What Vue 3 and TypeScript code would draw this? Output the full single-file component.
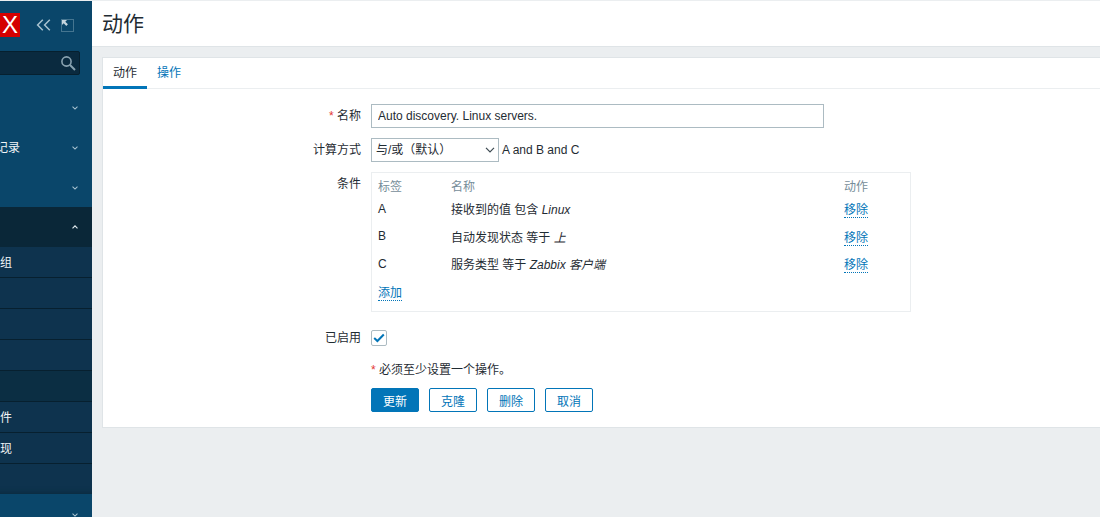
<script setup lang="ts">
interface MenuItem {
  label: string
  open?: boolean
}

interface Condition {
  tag: string
  text: string
  value: string
}

const topMenu: MenuItem[] = [{ label: '监测' }, { label: '资产记录' }, { label: '报表' }]

const subMenu = [
  { label: '主机群组' },
  { label: '模板' },
  { label: '主机' },
  { label: '维护' },
  { label: '动作', selected: true },
  { label: '关联事件' },
  { label: '自动发现' },
  { label: '服务' },
]

const conditions: Condition[] = [
  { tag: 'A', text: '接收到的值 包含 ', value: 'Linux' },
  { tag: 'B', text: '自动发现状态 等于 ', value: '上' },
  { tag: 'C', text: '服务类型 等于 ', value: 'Zabbix 客户端' },
]

const buttons = ['克隆', '删除', '取消']
</script>

<template>
  <div class="page">
    <aside class="sidebar">
      <div class="side-inner">
        <div class="logo-row">
          <div class="logo">X</div>
          <button class="icon-btn collapse" type="button">
            <svg width="15" height="12" viewBox="0 0 15 12" fill="none">
              <path d="M6.8.8L1.6 6l5.200 5.200M13.800.8L8.600 6l5.200 5.200" stroke="#a9c3d1" stroke-width="1.5" />
            </svg>
          </button>
          <button class="icon-btn expand" type="button">
            <svg width="13" height="13" viewBox="0 0 13 13" fill="none">
              <rect x=".5" y=".5" width="12" height="12" stroke="#a9c3d1" stroke-opacity=".75" stroke-dasharray="1 1" />
              <path d="M1 1h5L4.300 2.700l2.600 2.600-1.600 1.600-2.600-2.600L1 6z" fill="#c5d5de" />
            </svg>
          </button>
        </div>
        <div class="search">
          <svg width="16" height="16" viewBox="0 0 16 16" fill="none">
            <circle cx="6.5" cy="6.5" r="4.6" stroke="#8aa3b1" stroke-width="1.6" />
            <path d="M10 10l5 5" stroke="#8aa3b1" stroke-width="2" />
          </svg>
        </div>
        <nav class="menu">
          <a v-for="item in topMenu" :key="item.label" class="menu-item">
            <span>{{ item.label }}</span>
            <svg class="chev" width="6" height="4" viewBox="0 0 8 5" fill="none">
              <path d="M.7.7L4 4l3.300-3.300" stroke="#a9c3d1" stroke-width="1.400" />
            </svg>
          </a>
          <a class="menu-item active">
            <span>配置</span>
            <svg class="chev" width="6" height="4" viewBox="0 0 8 5" fill="none">
              <path d="M.7 4.300L4 1l3.300 3.300" stroke="#dfe8ed" stroke-width="1.600" />
            </svg>
          </a>
          <div class="sub">
            <a
              v-for="item in subMenu"
              :key="item.label"
              class="sub-item"
              :class="{ selected: item.selected }"
            >{{ item.label }}</a>
          </div>
          <a class="menu-item">
            <span>管理</span>
            <svg class="chev" width="6" height="4" viewBox="0 0 8 5" fill="none">
              <path d="M.7.7L4 4l3.300-3.300" stroke="#a9c3d1" stroke-width="1.400" />
            </svg>
          </a>
        </nav>
      </div>
    </aside>

    <main class="main">
      <header class="head">
        <h1>动作</h1>
      </header>
      <section class="card">
        <div class="tabs">
          <a class="tab on">动作</a>
          <a class="tab">操作</a>
        </div>
        <form class="form" @submit.prevent>
          <div class="row">
            <label class="lbl"><i>*</i> 名称</label>
            <input class="name-input" type="text" value="Auto discovery. Linux servers." />
          </div>
          <div class="row">
            <label class="lbl">计算方式</label>
            <div class="calc">
              <div class="select-wrap">
                <select class="calc-select">
                  <option>与/或（默认）</option>
                </select>
                <svg class="select-chev" width="10" height="6" viewBox="0 0 10 6" fill="none">
                  <path d="M1 .8L5 4.800 9 .8" stroke="#3d4a52" stroke-width="1.200" />
                </svg>
              </div>
              <span>A and B and C</span>
            </div>
          </div>
          <div class="row">
            <label class="lbl">条件</label>
            <div class="cond-box">
              <div class="cond-head">
                <span>标签</span>
                <span>名称</span>
                <span>动作</span>
              </div>
              <div v-for="c in conditions" :key="c.tag" class="cond-row">
                <span>{{ c.tag }}</span>
                <span>{{ c.text }}<em>{{ c.value }}</em></span>
                <span><a class="link">移除</a></span>
              </div>
              <div class="cond-row"><span><a class="link">添加</a></span></div>
            </div>
          </div>
          <div class="row enabled-row">
            <label class="lbl">已启用</label>
            <span class="check">
              <svg width="12" height="10" viewBox="0 0 12 10" fill="none">
                <path d="M1.200 5l3.200 3L10.800 1.500" stroke="#0275b8" stroke-width="2" />
              </svg>
            </span>
          </div>
          <div class="row note-row">
            <span></span>
            <p class="note"><i>*</i> 必须至少设置一个操作。</p>
          </div>
          <div class="row btn-row">
            <span></span>
            <div class="btns">
              <button class="btn primary" type="button">更新</button>
              <button v-for="b in buttons" :key="b" class="btn" type="button">{{ b }}</button>
            </div>
          </div>
        </form>
      </section>
    </main>
  </div>
</template>

<style>
html,
body {
  margin: 0;
  background: #ebeef0;
}
</style>

<style scoped>
.page {
  display: flex;
  width: 1100px;
  height: 517px;
  overflow: hidden;
  box-sizing: border-box;
  padding-top: 1px;
  background: #ebeef0;
  color: #1f2c33;
  font-family: "Liberation Sans", "Noto Sans CJK SC", sans-serif;
  font-size: 12px;
}

.sidebar {
  flex: 0 0 92px;
  overflow: hidden;
  background: #0a466a;
}

.side-inner {
  width: 128px;
  margin-left: -36px;
}

.logo-row {
  display: flex;
  align-items: center;
  height: 24px;
  padding-top: 12px;
  padding-bottom: 14px;
}

.logo {
  width: 56px;
  height: 24px;
  background: #d40000;
  color: #fff;
  font-size: 24px;
  line-height: 24px;
  text-align: right;
  padding-right: 2px;
  box-sizing: border-box;
}

.icon-btn {
  padding: 0;
  border: 0;
  background: none;
  display: flex;
}

.collapse {
  margin-left: 16px;
}

.expand {
  margin-left: 10px;
}

.search {
  display: flex;
  align-items: center;
  justify-content: flex-end;
  box-sizing: border-box;
  height: 24px;
  width: 116px;
  padding-right: 3px;
  background: #0a2a3f;
  border: 1px solid #06202f;
  border-radius: 2px;
}

.menu {
  margin-top: 12px;
}

.menu-item {
  display: flex;
  align-items: center;
  justify-content: space-between;
  box-sizing: border-box;
  height: 40px;
  padding: 0 14px 1px 8px;
  color: #f2f5f7;
}

.menu-item.active {
  padding-bottom: 0;
  background: #0a2738;
}

.chev {
  flex: none;
  margin-top: 3px;
}

.active .chev {
  margin-top: 0;
}

.sub {
  background: #0e334e;
  box-shadow: inset 0 -6px 6px -6px #0a2738;
}

.sub-item {
  display: block;
  box-sizing: border-box;
  height: 31px;
  line-height: 32px;
  color: #f2f5f7;
  white-space: nowrap;
  border-bottom: 1px solid #07202f;
}

.sub-item:last-child {
  height: 30px;
  border-bottom: 0;
}

.sub-item.selected {
  background: #0b2e43;
}

.main {
  flex: 1;
  min-width: 0;
  display: flex;
  flex-direction: column;
}

.head {
  display: flex;
  align-items: center;
  box-sizing: border-box;
  height: 46px;
  padding: 0 0 3px 10px;
  background: #fff;
  border-bottom: 1px solid #dfe4e7;
}

h1 {
  margin: 0;
  font-size: 21px;
  font-weight: 400;
}

.card {
  margin: 10px -10px 0 10px;
  height: 371px;
  box-sizing: border-box;
  background: #fff;
  border: 1px solid #dfe4e7;
}

.tabs {
  display: flex;
  height: 31px;
  box-sizing: border-box;
  border-bottom: 1px solid #ebeef0;
}

.tab {
  box-sizing: border-box;
  width: 44px;
  height: 31px;
  line-height: 30px;
  text-align: center;
  color: #0275b8;
}

.tab.on {
  color: #1f2c33;
  border-bottom: 3px solid #0275b8;
}

.form {
  display: flex;
  flex-direction: column;
  gap: 10px;
  padding-top: 15px;
}

.row {
  display: grid;
  grid-template-columns: 258px 1fr;
  column-gap: 10px;
  align-items: start;
}

.lbl {
  text-align: right;
  line-height: 24px;
}

i {
  font-style: normal;
  color: #e33734;
}

.name-input {
  box-sizing: border-box;
  width: 453px;
  height: 24px;
  padding: 0 6px;
  border: 1px solid #acbbc2;
  border-radius: 0;
  outline: 0;
  background: #fff;
  color: #1f2c33;
  font: inherit;
}

.calc {
  display: flex;
  align-items: center;
  gap: 3px;
}

.select-wrap {
  position: relative;
  display: flex;
}

.calc-select {
  appearance: none;
  box-sizing: border-box;
  width: 128px;
  height: 24px;
  padding: 0 4px;
  border: 1px solid #acbbc2;
  border-radius: 0;
  outline: 0;
  background: #fff;
  color: #1f2c33;
  font: inherit;
}

.select-chev {
  position: absolute;
  right: 4px;
  top: 9px;
}

.cond-box {
  box-sizing: border-box;
  width: 540px;
  height: 140px;
  padding: 3px 0 0 6px;
  border: 1px solid #ebeef0;
}

.cond-head,
.cond-row {
  display: grid;
  grid-template-columns: 73px 393px auto;
  align-items: center;
}

.cond-head {
  height: 19px;
  color: #768d99;
}

.cond-row {
  height: 27.5px;
}

em {
  font-style: italic;
}

.link {
  color: #0275b8;
  border-bottom: 1px dotted #0275b8;
}

.enabled-row {
  margin-top: 4px;
  align-items: center;
}

.check {
  display: flex;
  align-items: center;
  justify-content: center;
  box-sizing: border-box;
  width: 16px;
  height: 16px;
  border: 1px solid #acbbc2;
  border-radius: 2px;
  background: #fff;
}

.note-row {
  margin-top: 3px;
}

.note {
  margin: 0;
  line-height: 14px;
}

.btn-row {
  margin-top: 1px;
}

.btns {
  display: flex;
  gap: 10px;
}

.btn {
  box-sizing: border-box;
  width: 48px;
  height: 24px;
  padding: 0;
  border: 1px solid #0275b8;
  border-radius: 2px;
  background: #fff;
  color: #0275b8;
  font: inherit;
}

.btn.primary {
  background: #0275b8;
  color: #fff;
}
</style>
